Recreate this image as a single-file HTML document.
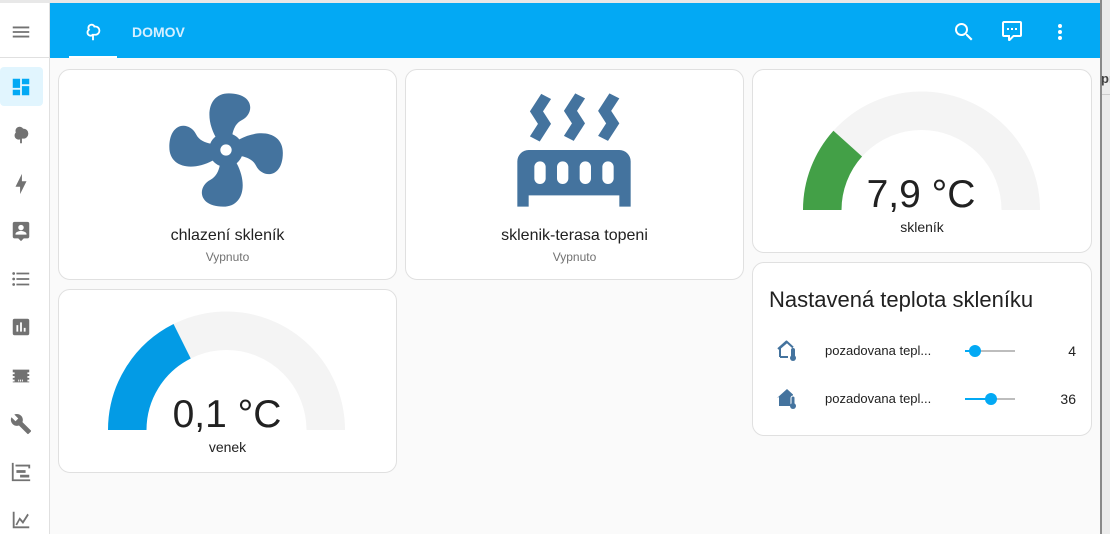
<!DOCTYPE html>
<html><head><meta charset="utf-8"><style>
*{box-sizing:border-box;margin:0;padding:0}
body{width:1110px;height:534px;overflow:hidden;background:#fafafa;font-family:"Liberation Sans",sans-serif;position:relative;color:#212121}
.abs{position:absolute}
.card{position:absolute;background:#fff;border:1px solid #e0e0e0;border-radius:12px}
.side{left:0;top:3px;width:50px;height:531px;background:#fff;border-right:1px solid #e0e0e0}
.si{position:absolute;left:10px;width:22px;height:22px;fill:#727272}
.name{position:absolute;width:100%;text-align:center;font-size:16px;color:#212121}
.st{position:absolute;width:100%;text-align:center;font-size:12px;color:#727272}
</style></head><body>
<div class="abs" style="left:0;top:0;width:1110px;height:3px;background:#e8e8e8"></div>
<div class="abs side"></div>
<div class="abs" style="left:50px;top:3px;width:1050px;height:55px;background:#03a9f4"></div>
<div class="abs" style="left:1100px;top:0;width:2px;height:534px;background:#8a8a8a"></div>
<div class="abs" style="left:1102px;top:0;width:8px;height:534px;background:#ececec"></div>
<div class="abs" style="left:1101px;top:71px;font-size:13px;font-weight:bold;color:#444">pr</div>
<div class="abs" style="left:1102px;top:94px;width:8px;height:1px;background:#ccc"></div>
<div class="abs" style="left:0;top:57px;width:50px;height:1px;background:#e0e0e0"></div>
<svg class="si" style="top:21px" viewBox="0 0 24 24"><path d="M3,6H21V8H3V6M3,11H21V13H3V11M3,16H21V18H3V16Z"/></svg>
<div class="abs" style="left:0;top:67px;width:43px;height:39px;background:#e1f5fe;border-radius:4px"></div>
<svg class="si" style="top:76px;fill:#03a9f4" viewBox="0 0 24 24"><path d="M13,3V9H21V3M13,21H21V11H13M3,21H11V15H3M3,13H11V3H3V13Z"/></svg>
<svg class="si" style="top:124px" viewBox="0 0 24 24"><path d="M11,21V16.74C10.53,16.91 10.03,17 9.5,17C7,17 5,15 5,12.5C5,11.23 5.5,10.09 6.36,9.27C6.13,8.73 6,8.13 6,7.5C6,5 8,3 10.5,3C12.06,3 13.44,3.8 14.25,5C14.33,5 14.41,5 14.5,5A5.5,5.5 0 0,1 20,10.5A5.5,5.5 0 0,1 14.5,16C14,16 13.5,15.93 13,15.790V21H11Z"/></svg>
<svg class="si" style="top:173px" viewBox="0 0 24 24"><path d="M11,15H6L13,1V9H18L11,23V15Z"/></svg>
<svg class="si" style="top:220px" viewBox="0 0 24 24"><path d="M19,2H5A2,2 0 0,0 3,4V18A2,2 0 0,0 5,20H9L12,23L15,20H19A2,2 0 0,0 21,18V4A2,2 0 0,0 19,2M12,5.3A3,3 0 0,1 15,8.3A3,3 0 0,1 12,11.3A3,3 0 0,1 9,8.3A3,3 0 0,1 12,5.3M18,16H6V15.1C6,13.1 10,12 12,12C14,12 18,13.1 18,15.1V16Z"/></svg>
<svg class="si" style="top:268px" viewBox="0 0 24 24"><path d="M7,5H21V7H7V5M7,13V11H21V13H7M4,4.5A1.5,1.5 0 0,1 5.5,6A1.5,1.5 0 0,1 4,7.5A1.5,1.5 0 0,1 2.5,6A1.5,1.5 0 0,1 4,4.5M4,10.5A1.5,1.5 0 0,1 5.5,12A1.5,1.5 0 0,1 4,13.5A1.5,1.5 0 0,1 2.5,12A1.5,1.5 0 0,1 4,10.5M7,19V17H21V19H7M4,16.5A1.5,1.5 0 0,1 5.5,18A1.5,1.5 0 0,1 4,19.5A1.5,1.5 0 0,1 2.5,18A1.5,1.5 0 0,1 4,16.5Z"/></svg>
<svg class="si" style="top:316px" viewBox="0 0 24 24"><path d="M19,3H5A2,2 0 0,0 3,5V19A2,2 0 0,0 5,21H19A2,2 0 0,0 21,19V5A2,2 0 0,0 19,3M9,17H7V10H9V17M13,17H11V7H13V17M17,17H15V13H17V17Z"/></svg>
<svg class="si" style="top:365px" viewBox="0 0 24 24"><path d="M3,5H21V8H19V10H21V12H19V14H21V16H19V18H21V19H3V18H5V16H3V14H5V12H3V10H5V8H3V5M9,16V18H10V16H9M11,16V18H12V16H11M13,16V18H14V16H13Z"/></svg>
<svg class="si" style="top:413px" viewBox="0 0 24 24"><path d="M22.7,19L13.6,9.9C14.5,7.6 14,4.9 12.1,3C10.1,1 7.1,0.6 4.7,1.7L9,6L6,9L1.6,4.7C0.4,7.1 0.9,10.1 2.9,12.1C4.8,14 7.5,14.5 9.8,13.6L18.9,22.7C19.3,23.1 19.9,23.1 20.3,22.7L22.6,20.4C23.1,20 23.1,19.3 22.7,19Z"/></svg>
<svg class="si" style="top:461px" viewBox="0 0 24 24"><path d="M2,2H4V20H22V22H2V2M7,10H17V13H7V10M11,15H21V18H11V15M6,4H22V8H20V6H6V4Z"/></svg>
<svg class="si" style="top:509px" viewBox="0 0 24 24"><path d="M3,3H5V19H21V21H3V3M6,17L10.5,9L14,13L19,5L20.5,6.5L14.2,16.3L10.7,12.3L7.7,17.8Z"/></svg>
<svg class="abs" style="left:82px;top:21px;width:22px;height:22px" viewBox="0 0 24 24"><path fill="#fff" d="M11,21V16.74C10.53,16.91 10.03,17 9.5,17C7,17 5,15 5,12.5C5,11.23 5.5,10.09 6.36,9.27C6.13,8.73 6,8.13 6,7.5C6,5 8,3 10.5,3C12.06,3 13.44,3.8 14.25,5C14.33,5 14.41,5 14.5,5A5.5,5.5 0 0,1 20,10.5A5.5,5.5 0 0,1 14.5,16C14,16 13.5,15.93 13,15.79V21H11M9.5,15C10.5,15 11,14 11,14H13C13,14 13.6,14 14.5,14A3.5,3.5 0 0,0 18,10.5A3.5,3.5 0 0,0 14.5,7C14,7 13.3,7.1 13,7.3C12.6,6 11.7,5 10.5,5A2.5,2.5 0 0,0 8,7.5C8,8.5 8.6,9.3 9,9.8C7.8,10.3 7,11.3 7,12.5A2.5,2.5 0 0,0 9.5,15Z"/></svg>
<div class="abs" style="left:69px;top:56px;width:48px;height:2px;background:#fff"></div>
<div class="abs" style="left:132px;top:24px;font-size:14px;color:#d6efff;font-weight:bold">DOMOV</div>
<svg class="abs" style="left:952px;top:20px;width:24px;height:24px" viewBox="0 0 24 24"><path fill="#fff" d="M9.5,3A6.5,6.5 0 0,1 16,9.5C16,11.11 15.41,12.59 14.44,13.73L14.71,14H15.5L20.5,19L19,20.5L14,15.5V14.71L13.73,14.44C12.59,15.41 11.11,16 9.5,16A6.5,6.5 0 0,1 3,9.5A6.5,6.5 0 0,1 9.5,3M9.5,5C7,5 5,7 5,9.5C5,12 7,14 9.5,14C12,14 14,12 14,9.5C14,7 12,5 9.5,5Z"/></svg>
<svg class="abs" style="left:1000px;top:19px;width:24px;height:24px" viewBox="0 0 24 24"><path fill="#fff" d="M9,22A1,1 0 0,1 8,21V18H4A2,2 0 0,1 2,16V4C2,2.89 2.9,2 4,2H20A2,2 0 0,1 22,4V16A2,2 0 0,1 20,18H13.9L10.2,21.71C10,21.9 9.75,22 9.5,22H9M10,16V19.08L13.08,16H20V4H4V16H10M17,11H15V9H17V11M13,11H11V9H13V11M9,11H7V9H9V11Z"/></svg>
<svg class="abs" style="left:1048px;top:20px;width:24px;height:24px" viewBox="0 0 24 24"><path fill="#fff" d="M12,16A2,2 0 0,1 14,18A2,2 0 0,1 12,20A2,2 0 0,1 10,18A2,2 0 0,1 12,16M12,10A2,2 0 0,1 14,12A2,2 0 0,1 12,14A2,2 0 0,1 10,12A2,2 0 0,1 12,10M12,4A2,2 0 0,1 14,6A2,2 0 0,1 12,8A2,2 0 0,1 10,6A2,2 0 0,1 12,4Z"/></svg>
<div class="card" style="left:58px;top:69px;width:339px;height:211px">
<div class="name" style="top:157px">chlazení skleník</div><div class="st" style="top:180px">Vypnuto</div></div>
<div class="card" style="left:405px;top:69px;width:339px;height:211px">
<div class="name" style="top:157px">sklenik-terasa topeni</div><div class="st" style="top:180px">Vypnuto</div></div>
<div class="card" style="left:752px;top:69px;width:340px;height:184px">
<div class="name" style="top:149px;font-size:14px">skleník</div></div>
<div class="card" style="left:58px;top:289px;width:339px;height:184px">
<div class="name" style="top:149px;font-size:14px">venek</div></div>
<div class="card" style="left:752px;top:262px;width:340px;height:174px">
<div class="abs" style="left:16px;top:24px;font-size:22px;color:#212121">Nastavená teplota skleníku</div>
<div class="abs" style="left:72px;top:80px;font-size:13px">pozadovana tepl...</div>
<div class="abs" style="left:72px;top:128px;font-size:13px">pozadovana tepl...</div>
<div class="abs" style="right:15px;top:80px;font-size:14px">4</div>
<div class="abs" style="right:15px;top:128px;font-size:14px">36</div>
<div class="abs" style="left:212px;top:87px;width:50px;height:2px;background:#bdbdbd"></div>
<div class="abs" style="left:212px;top:87px;width:10px;height:2px;background:#03a9f4"></div>
<div class="abs" style="left:216px;top:82px;width:12px;height:12px;border-radius:50%;background:#03a9f4"></div>
<div class="abs" style="left:212px;top:135px;width:50px;height:2px;background:#bdbdbd"></div>
<div class="abs" style="left:212px;top:135px;width:26px;height:2px;background:#03a9f4"></div>
<div class="abs" style="left:232px;top:130px;width:12px;height:12px;border-radius:50%;background:#03a9f4"></div>
</div>
<svg class="abs" style="left:776px;top:338px;width:26px;height:24px" viewBox="0 0 26 24"><path fill="none" stroke="#44739e" stroke-width="2" d="M4,19V10L11,4L17,9.5M4,19H12"/><path fill="none" stroke="#44739e" stroke-width="2" d="M2,11L11,3"/><rect x="15" y="10" width="4" height="10" rx="2" fill="#44739e"/><circle cx="17" cy="20" r="3" fill="#44739e"/></svg>
<svg class="abs" style="left:776px;top:386px;width:26px;height:24px" viewBox="0 0 26 24"><path fill="#44739e" d="M3,20V11L1,12L11,3L17,8.5V20Z"/><rect x="15" y="10" width="4" height="10" rx="2" fill="#44739e" stroke="#fff" stroke-width="1"/><circle cx="17" cy="20" r="3" fill="#44739e"/></svg>
<svg class="abs" style="left:158px;top:82px;width:136px;height:136px" viewBox="0 0 24 24"><path fill="#44739e" d="M12,11A1,1 0 0,0 11,12A1,1 0 0,0 12,13A1,1 0 0,0 13,12A1,1 0 0,0 12,11M12.5,2C17,2 17.11,5.570 14.75,6.75C13.76,7.24 13.32,8.29 13.13,9.22C13.61,9.42 14.030,9.73 14.35,10.13C18.05,8.13 22.03,8.92 22.03,12.5C22.03,17 18.46,17.1 17.28,14.73C16.78,13.74 15.72,13.3 14.79,13.11C14.59,13.59 14.28,14 13.88,14.34C15.87,18.03 15.08,22 11.5,22C7,22 6.91,18.42 9.27,17.24C10.25,16.75 10.69,15.71 10.89,14.79C10.4,14.59 9.97,14.27 9.65,13.87C5.96,15.85 2,15.07 2,11.5C2,7 5.56,6.89 6.74,9.26C7.24,10.25 8.29,10.68 9.22,10.87C9.41,10.39 9.73,9.97 10.14,9.65C8.15,5.96 8.94,2 12.5,2Z"/></svg>
<svg class="abs" style="left:506px;top:82px;width:136px;height:136px" viewBox="0 0 24 24"><path fill="#44739e" d="M7.95,3L6.53,5.19L7.95,7.4H7.94L5.95,10.5L4.22,9.6L5.64,7.39L4.22,5.19L6.22,2.09L7.95,3M13.95,2.89L12.53,5.1L13.95,7.3L13.94,7.31L11.95,10.4L10.22,9.5L11.64,7.3L10.22,5.1L12.22,2L13.95,2.89M20,2.89L18.56,5.1L20,7.3V7.31L18,10.4L16.250,9.5L17.67,7.3L16.25,5.1L18.25,2L20,2.89M2,22V14A2,2 0 0,1 4,12H20A2,2 0 0,1 22,14V22H20V20H4V22H2M6,14A1,1 0 0,0 5,15V17A1,1 0 0,0 6,18A1,1 0 0,0 7,17V15A1,1 0 0,0 6,14M10,14A1,1 0 0,0 9,15V17A1,1 0 0,0 10,18A1,1 0 0,0 11,17V15A1,1 0 0,0 10,14M14,14A1,1 0 0,0 13,15V17A1,1 0 0,0 14,18A1,1 0 0,0 15,17V15A1,1 0 0,0 14,14M18,14A1,1 0 0,0 17,15V17A1,1 0 0,0 18,18A1,1 0 0,0 19,17V15A1,1 0 0,0 18,14Z"/></svg>
<svg class="abs" style="left:0;top:0;width:1110px;height:534px" viewBox="0 0 1110 534">
<path d="M822.25 210 A99.25 99.25 0 0 1 1020.75 210" fill="none" stroke="#f4f4f4" stroke-width="38.5"/>
<path d="M822.25 210 A99.25 99.25 0 0 1 847.74 143.59" fill="none" stroke="#43a047" stroke-width="38.5"/>
<path d="M127.25 430 A99.25 99.25 0 0 1 325.75 430" fill="none" stroke="#f4f4f4" stroke-width="38.5"/>
<path d="M127.25 430 A99.25 99.25 0 0 1 182.13 341.27" fill="none" stroke="#039be5" stroke-width="38.5"/>
<text x="921" y="207" text-anchor="middle" font-family="Liberation Sans" font-size="39" fill="#212121">7,9 °C</text>
<text x="227" y="427" text-anchor="middle" font-family="Liberation Sans" font-size="39" fill="#212121">0,1 °C</text>
</svg>
</body></html>
